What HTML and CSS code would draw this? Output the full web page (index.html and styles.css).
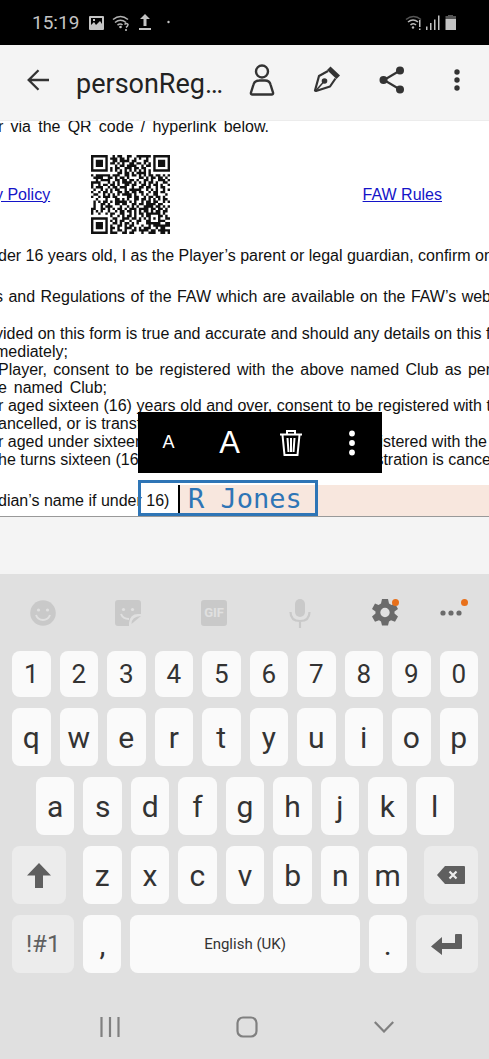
FILE: index.html
```html
<!DOCTYPE html>
<html lang="en">
<head>
    <meta charset="UTF-8">
    <meta name="viewport" content="width=device-width, initial-scale=1.0">
    <title>personReg</title>
    <link rel="stylesheet" href="styles.css">
</head>
<body>

    <div class="status-bar">
        <span class="time">15:19</span>
        <svg class="status-left" width="86" height="18" viewBox="0 0 86 18">
            <path fill="#c4c4c4" fill-rule="evenodd" d="M2 2h12a1 1 0 0 1 1 1v12a1 1 0 0 1-1 1H1a1 1 0 0 1-1-1V3a1 1 0 0 1 1-1zM2 4v7l3-3 2 3 4-4 2 3V4zM4 5h2v2H4z"/>
            <g fill="none" stroke="#b4b4b4" stroke-width="1.6">
                <path d="M24 5.500q7.500-6 15 0M26 8.500q5.500-4.500 11 0M28.500 11q3-2 5 0"/>
                <path d="M35.500 10.500q2-2 3.500 0 0 1.500-2 3"/>
            </g>
            <circle cx="31.500" cy="13" r="1.300" fill="#c4c4c4"/>
            <circle cx="37" cy="16" r="1" fill="#c4c4c4"/>
            <path fill="#c4c4c4" d="M56 0l5 5h-3.500v7h-3V5H51zM50 14h12v2H50z"/>
            <circle cx="79.500" cy="8" r="1.200" fill="#c4c4c4"/>
        </svg>
        <svg class="status-right" width="52" height="18" viewBox="0 0 52 18">
            <g fill="none" stroke-width="1.600">
                <path stroke="#555" d="M1 5.500q7.500-6 15 0"/>
                <path stroke="#bbb" d="M3 8q5-4 10 0M5.500 11q3-2.500 5.500 0"/>
            </g>
            <circle cx="8" cy="13.500" r="1.200" fill="#bbb"/>
            <path fill="#c4c4c4" d="M14 6h1.500v7H14zM14 14.500h1.500V16H14zM21 12.500h1.500V16H21zM25 9h1.500v7H25zM29 5.500h1.500V16H29zM33 1.500h1.500V16H33z"/>
            <path fill="#555" d="M43 1h5v1h3v3H40.500V2H43z"/>
            <path fill="#c4c4c4" d="M40.500 5H51v11H40.500z"/>
        </svg>
    </div>

    <header class="app-bar">
        <button class="back" aria-label="Back">
            <svg width="24" height="24" viewBox="0 0 24 24" fill="none" stroke="#333" stroke-width="2.300"><path d="M23 12H3M12.500 2.200L2.700 12l9.800 9.800"/></svg>
        </button>
        <h1>personReg…</h1>
        <button class="bar-icon" aria-label="Fill and sign">
            <svg width="26" height="32" viewBox="0 0 26 32" fill="none" stroke="#333" stroke-width="2.400"><circle cx="13" cy="7.500" r="6"/><path d="M10 16.500h6q4.500 0 5.500 4l2.500 8q.5 2-1.500 2h-19q-2 0-1.500-2l2.500-8q1-4 6-4z"/></svg>
        </button>
        <button class="bar-icon" aria-label="Sign">
            <svg width="28" height="28" viewBox="0 0 28 28"><path fill="#333" d="M17.500.5l9.500 9-3.500 3.500L14 4z"/><path fill="none" stroke="#333" stroke-width="2.200" stroke-linejoin="round" d="M15 5L6 10 2 24.500l1 .5 14-4.500 5.500-8"/><path stroke="#333" stroke-width="1.500" d="M3 24.500l8-9"/><circle cx="11.500" cy="15" r="2.800" fill="#333"/></svg>
        </button>
        <button class="bar-icon" aria-label="Share">
            <svg width="26" height="28" viewBox="0 0 26 28" fill="#333"><path fill="none" stroke="#333" stroke-width="2.200" d="M21 4.500L5 14l16 9.500"/><circle cx="21" cy="4.500" r="4"/><circle cx="4.500" cy="14" r="4"/><circle cx="21" cy="23.500" r="4"/></svg>
        </button>
        <button class="bar-icon" aria-label="More options">
            <svg width="6" height="24" viewBox="0 0 6 24" fill="#333"><circle cx="3" cy="4" r="2.700"/><circle cx="3" cy="12" r="2.700"/><circle cx="3" cy="20" r="2.700"/></svg>
        </button>
    </header>

    <main class="viewer">
        <div class="page">
            <p class="line intro">r via the QR code / hyperlink below.</p>

            <div class="links">
                <a href="#">y Policy</a>
                <svg id="qr" width="79" height="79" viewBox="0 0 33 33" role="img" aria-label="QR code"></svg>
                <a href="#">FAW Rules</a>
            </div>

            <p class="line guardian">der 16 years old, I as the Player’s parent or legal guardian, confirm on</p>
            <p class="line cut rules">s and Regulations of the FAW which are available on the FAW’s web</p>

            <p class="line cut">vided on this form is true and accurate and should any details on this fo</p>
            <p class="line cut short">mediately;</p>
            <p class="line">Player, consent to be registered with the above named Club as per</p>
            <p class="line named">e named Club;</p>
            <p class="line">r aged sixteen (16) years old and over, consent to be registered with t</p>
            <p class="line short">ancelled, or is transferred</p>
            <p class="line split under"><span>r aged under sixteen</span><span>registered with the</span></p>
            <p class="line split"><span>he turns sixteen (16)</span><span>registration is cance</span></p>

            <div class="field">
                <label for="guardian">dian’s name if under 16)</label>
                <input id="guardian" type="text" value="R Jones">
                <div class="selection"></div>
                <div class="popup">
                    <button class="small-a" aria-label="Decrease text size">A</button>
                    <button class="large-a" aria-label="Increase text size">A</button>
                    <button aria-label="Delete">
                        <svg width="24" height="28" viewBox="0 0 24 28" fill="none" stroke="#fff" stroke-width="2"><path d="M1 5.500h22M8 5V2h8v3M3.500 6l2 20h13l2-20M8.500 9l1 14M12 9v14M15.500 9l-1 14"/></svg>
                    </button>
                    <button aria-label="More">
                        <svg width="6" height="26" viewBox="0 0 6 26" fill="#fff"><circle cx="3" cy="3.500" r="2.900"/><circle cx="3" cy="13" r="2.900"/><circle cx="3" cy="22.500" r="2.900"/></svg>
                    </button>
                </div>
            </div>
        </div>
    </main>

    <section class="keyboard">
        <div class="tools">
            <button aria-label="Emoji">
                <svg width="26" height="26" viewBox="0 0 26 26"><circle cx="13" cy="13" r="12.800" fill="#c9c9c9"/><g fill="#e0e0e0"><circle cx="8.500" cy="10" r="1.600"/><circle cx="17.500" cy="10" r="1.600"/></g><path fill="none" stroke="#e0e0e0" stroke-width="2" d="M6 15q2 5 7 5t7-5"/></svg>
            </button>
            <button aria-label="Stickers">
                <svg width="26" height="26" viewBox="0 0 26 26"><path fill="#c9c9c9" d="M3 0h20a3 3 0 0 1 3 3v11h-3q-8 0-9 9v3H3a3 3 0 0 1-3-3V3a3 3 0 0 1 3-3zM16.500 24q0-7.500 9.500-8z"/><g fill="#e0e0e0"><circle cx="8.500" cy="9.500" r="1.600"/><circle cx="17.500" cy="9.500" r="1.600"/></g><path fill="none" stroke="#e0e0e0" stroke-width="2" d="M6 14q2 5 8 5"/></svg>
            </button>
            <button aria-label="GIF"><span class="gif">GIF</span></button>
            <button aria-label="Voice input">
                <svg width="22" height="30" viewBox="0 0 22 30"><rect x="6" y="1" width="10" height="18" rx="5" fill="#c9c9c9"/><path fill="none" stroke="#c9c9c9" stroke-width="2.200" d="M1.500 14q0 9 9.500 9t9.500-9M11 23v7"/></svg>
            </button>
            <button aria-label="Settings">
                <svg width="26" height="27" viewBox="0 0 26 27"><path fill="#6b6b6b" fill-rule="evenodd" d="M10 0h6l1 4.500 2.500 1.500L23 4.500l3 5.500-3.500 2.500v2L26 17.500l-3 5.300-4-1.500-2 1.200-1 4h-6l-1-4-2-1.200-4 1.500-3-5.300 3.500-3v-2L0 10l3-5.500L6.500 6 9 4.500zM13 8.800a4.700 4.700 0 1 0 0 9.400 4.700 4.700 0 0 0 0-9.400z"/></svg>
                <span class="dot"></span>
            </button>
            <button class="more" aria-label="More tools">
                <svg width="22" height="6" viewBox="0 0 22 6" fill="#6b6b6b"><circle cx="3" cy="3" r="2.600"/><circle cx="11" cy="3" r="2.600"/><circle cx="19" cy="3" r="2.600"/></svg>
                <span class="dot"></span>
            </button>
        </div>

        <div class="keys">
            <div class="row numbers">
                <button>1</button><button>2</button><button>3</button><button>4</button><button>5</button><button>6</button><button>7</button><button>8</button><button>9</button><button>0</button>
            </div>
            <div class="row">
                <button>q</button><button>w</button><button>e</button><button>r</button><button>t</button><button>y</button><button>u</button><button>i</button><button>o</button><button>p</button>
            </div>
            <div class="row home-row">
                <button>a</button><button>s</button><button>d</button><button>f</button><button>g</button><button>h</button><button>j</button><button>k</button><button>l</button>
            </div>
            <div class="row shift-row">
                <button class="special" aria-label="Shift">
                    <svg width="24" height="25" viewBox="0 0 24 25" fill="#5f5f5f"><path d="M12 0l12 12.500h-8V25H8V12.500H0z"/></svg>
                </button>
                <div class="row letters">
                    <button>z</button><button>x</button><button>c</button><button>v</button><button>b</button><button>n</button><button>m</button>
                </div>
                <button class="special" aria-label="Backspace">
                    <svg width="28" height="18" viewBox="0 0 28 18"><path fill="#5f5f5f" d="M8 0h19a1 1 0 0 1 1 1v16a1 1 0 0 1-1 1H8L0 9z"/><path stroke="#ececec" stroke-width="2.200" d="M12.500 5.500l7 7M19.500 5.500l-7 7"/></svg>
                </button>
            </div>
            <div class="row bottom-row">
                <button class="special wide symbols">!#1</button>
                <button>,</button>
                <button class="space">English (UK)</button>
                <button>.</button>
                <button class="special wide" aria-label="Enter">
                    <svg width="31" height="21" viewBox="0 0 31 21" fill="#5f5f5f"><path d="M25 0h5a1 1 0 0 1 1 1v13a1 1 0 0 1-1 1H11v6L0 12.500 11 3v6h13V1a1 1 0 0 1 1-1z"/></svg>
                </button>
            </div>
        </div>

        <nav class="nav-bar">
            <button aria-label="Recents">
                <svg width="20" height="20" viewBox="0 0 20 20" stroke="#808080" stroke-width="2.200"><path d="M1.500 0v20M10 0v20M18.500 0v20"/></svg>
            </button>
            <button aria-label="Home">
                <svg width="22" height="22" viewBox="0 0 22 22" fill="none" stroke="#808080" stroke-width="2.200"><rect x="1.500" y="1.500" width="19" height="19" rx="5.500"/></svg>
            </button>
            <button aria-label="Hide keyboard">
                <svg width="20" height="12" viewBox="0 0 20 12" fill="none" stroke="#808080" stroke-width="2.200"><path d="M.8 1l9.200 9.500L19.200 1"/></svg>
            </button>
        </nav>
    </section>

    <script src="script.js"></script>
</body>
</html>
```
FILE: styles.css
```css
* {
    box-sizing: border-box;
}
body {
    margin: 0;
    min-height: 100vh;
    display: flex;
    flex-direction: column;
    background-color: #f4f4f4;
    font-family: Roboto, sans-serif;
    overflow-x: hidden;
}
button {
    display: flex;
    align-items: center;
    justify-content: center;
    padding: 0;
    border: none;
    background: none;
    font-family: inherit;
    cursor: pointer;
}
p, h1 {
    margin: 0;
}

/* status bar */
.status-bar {
    display: flex;
    align-items: center;
    height: 45px;
    padding: 0 32px;
    background-color: #000;
    color: #c4c4c4;
}
.time {
    font-size: 19px;
}
.status-left {
    margin-left: 10px;
}
.status-right {
    margin-left: auto;
}

/* app bar */
.app-bar {
    display: flex;
    align-items: center;
    height: 76px;
    padding-bottom: 5px;
    background-color: #f4f4f4;
    border-bottom: 1px solid #ececec;
}
.back {
    width: 76px;
}
.app-bar h1 {
    flex: 1;
    padding-top: 8px;
    font-size: 27px;
    font-weight: 400;
    line-height: 32px;
    color: #222;
    white-space: nowrap;
}
.bar-icon {
    width: 65px;
    height: 48px;
}

/* document */
.viewer {
    flex: 1;
}
.page {
    overflow: hidden;
    background-color: #fff;
    border-bottom: 1px solid #999;
    font-family: "Liberation Sans", Arial, sans-serif;
    font-size: 16px;
    line-height: 18px;
    color: #111;
}
.line {
    margin: 0 -2px;
    white-space: nowrap;
    text-align-last: justify;
}
.cut {
    margin-left: -5px;
}
.intro {
    width: 271px;
    margin-top: -3px;
}
.short {
    text-align-last: left;
}
.named {
    width: 109px;
}
.split {
    display: flex;
    justify-content: space-between;
}
.under {
    padding-right: 4px;
}
.links {
    display: flex;
    align-items: center;
    margin: 19px 47px 13px -5px;
}
.links a {
    color: #1414c8;
}
.links a:last-child {
    margin-left: auto;
}
#qr {
    margin-left: 41px;
}
.guardian {
    margin-bottom: 23px;
}
.rules {
    margin-bottom: 19px;
}
.field {
    position: relative;
    display: flex;
    height: 31px;
    margin-top: 16px;
}
.field label {
    width: 180px;
    margin-left: -2px;
    line-height: 32px;
    white-space: nowrap;
}
.field input {
    flex: 1;
    min-width: 0;
    padding: 0 0 4px 8px;
    border: none;
    border-left: 2px solid #000;
    border-radius: 0;
    outline: none;
    background-color: #f8e7de;
    font-family: "DejaVu Sans Mono", monospace;
    font-size: 27px;
    color: #2e75b6;
}
.selection {
    position: absolute;
    left: 138px;
    bottom: 0;
    width: 180px;
    height: 36px;
    border: 3px solid #2e75b6;
    pointer-events: none;
}
.popup {
    position: absolute;
    left: 138px;
    bottom: 43px;
    width: 244px;
    height: 61px;
    display: flex;
    background-color: #000;
}
.popup button {
    flex: 1;
    color: #fff;
}
.popup .small-a {
    font-size: 18px;
}
.popup .large-a {
    font-size: 31px;
}

/* keyboard */
.keyboard {
    background-color: #e0e0e0;
}
.tools {
    display: flex;
    height: 77px;
}
.tools button {
    position: relative;
    flex: 86;
}
.tools .more {
    flex: 46;
    margin-right: 15px;
}
.gif {
    width: 26px;
    border-radius: 3px;
    background-color: #c9c9c9;
    color: #e0e0e0;
    font-size: 13px;
    font-weight: 700;
    line-height: 26px;
}
.dot {
    position: absolute;
    top: 25px;
    left: calc(50% + 7px);
    width: 7px;
    height: 7px;
    border-radius: 50%;
    background-color: #e8701a;
}
.more .dot {
    left: calc(50% + 10px);
}
.keys {
    display: flex;
    flex-direction: column;
    gap: 11px;
    padding: 0 11px 0 12px;
}
.row {
    display: flex;
    gap: 9px;
}
.row button {
    flex: 1 1 0;
    height: 58px;
    border-radius: 8px;
    background-color: #fafafa;
    color: #333;
    font-size: 30px;
}
.row.numbers button {
    height: 46px;
    font-size: 26px;
}
.home-row {
    padding: 0 24px;
}
.shift-row {
    gap: 17px;
}
.row .special {
    background-color: #ececec;
    color: #5f5f5f;
}
.shift-row .special {
    flex: 54;
}
.letters {
    flex: 324;
}
.bottom-row button {
    flex: 38 1 0;
}
.bottom-row .wide {
    flex: 62 1 0;
}
.bottom-row .symbols {
    font-size: 24px;
}
.bottom-row .space {
    flex: 228 1 0;
    font-size: 15px;
}
.nav-bar {
    display: flex;
    height: 86px;
    padding: 21px 37px 0 41px;
}
.nav-bar button {
    flex: 1;
}
```
FILE: script.js
```javascript
// QR modules, one string per row
const modules = [
    '#######..#.##..##..######.#######',
    '#.....#.###.##.#..#.#..#..#.....#',
    '#.###.#..##.####.##...##..#.###.#',
    '#.###.#.##.#.#..##.##.#.#.#.###.#',
    '#.###.#...#.##.####..#.##.#.###.#',
    '#.....#.#.##..###.##.##...#.....#',
    '#######.#.#.#.#.#.#.#.#.#.#######',
    '...........##.##.#.####.#........',
    '#.######.###..##.##.#.#.##.##.#.#',
    '.####..##.#.##.#....##.#.##.##.#.',
    '..#.####..##.##.##.#..##.#..###.#',
    '####...#.#.#.####.#.#.#.##.#..##.',
    '#..#.##.##.#..##.##..##.#.##.#..#',
    '#.###..#.##.###..#..##.##..#.##..',
    '.#..#.#.#.##..#.#####..#.#.#..#.#',
    '#..#.##.#..##.##.##.##..#.##.##..',
    '.##..#.#.#.#.####.#..#.#..##...#.',
    '#..#.###.##....##.##..#.##.##.#..',
    '..#...#...##.#.#..##.##.#.#.#.##.',
    '.#.#.##.#.#####.#.#..#.##.##..#.#',
    '.#..##.#..##.##..##.##.####.##...',
    '.#..#.###...#..#.#.#..####.##.#.#',
    '##..##.#.#.##.#.###.####.##.##.#.',
    '#.#.#..#..#.##.##.#.#.##.#.##.##.',
    '#..#..#.##..##..#.#.##.######.#..',
    '........#..#.#.##.#..#.##...##.#.',
    '#######..##..###.##.#.#.#.#.#..##',
    '#.....#.#.#.##..#..##..##...###..',
    '#.###.#..##.#.##.#.#...######..##',
    '#.###.#.#..##.#.##...#..#.#######',
    '#.###.#.##.#..###.#.#.###..#.##..',
    '#.....#.#..##.#..##.####.##.#####',
    '#######.###..##.##...#..###..##.#'
];

let d = '';
modules.forEach((row, y) => {
    for (let x = 0; x < row.length; x++) {
        if (row[x] === '#') {
            d += `M${x} ${y}h1v1h-1z`;
        }
    }
});

document.getElementById('qr').innerHTML = `<path fill="#111" d="${d}"/>`;
```
